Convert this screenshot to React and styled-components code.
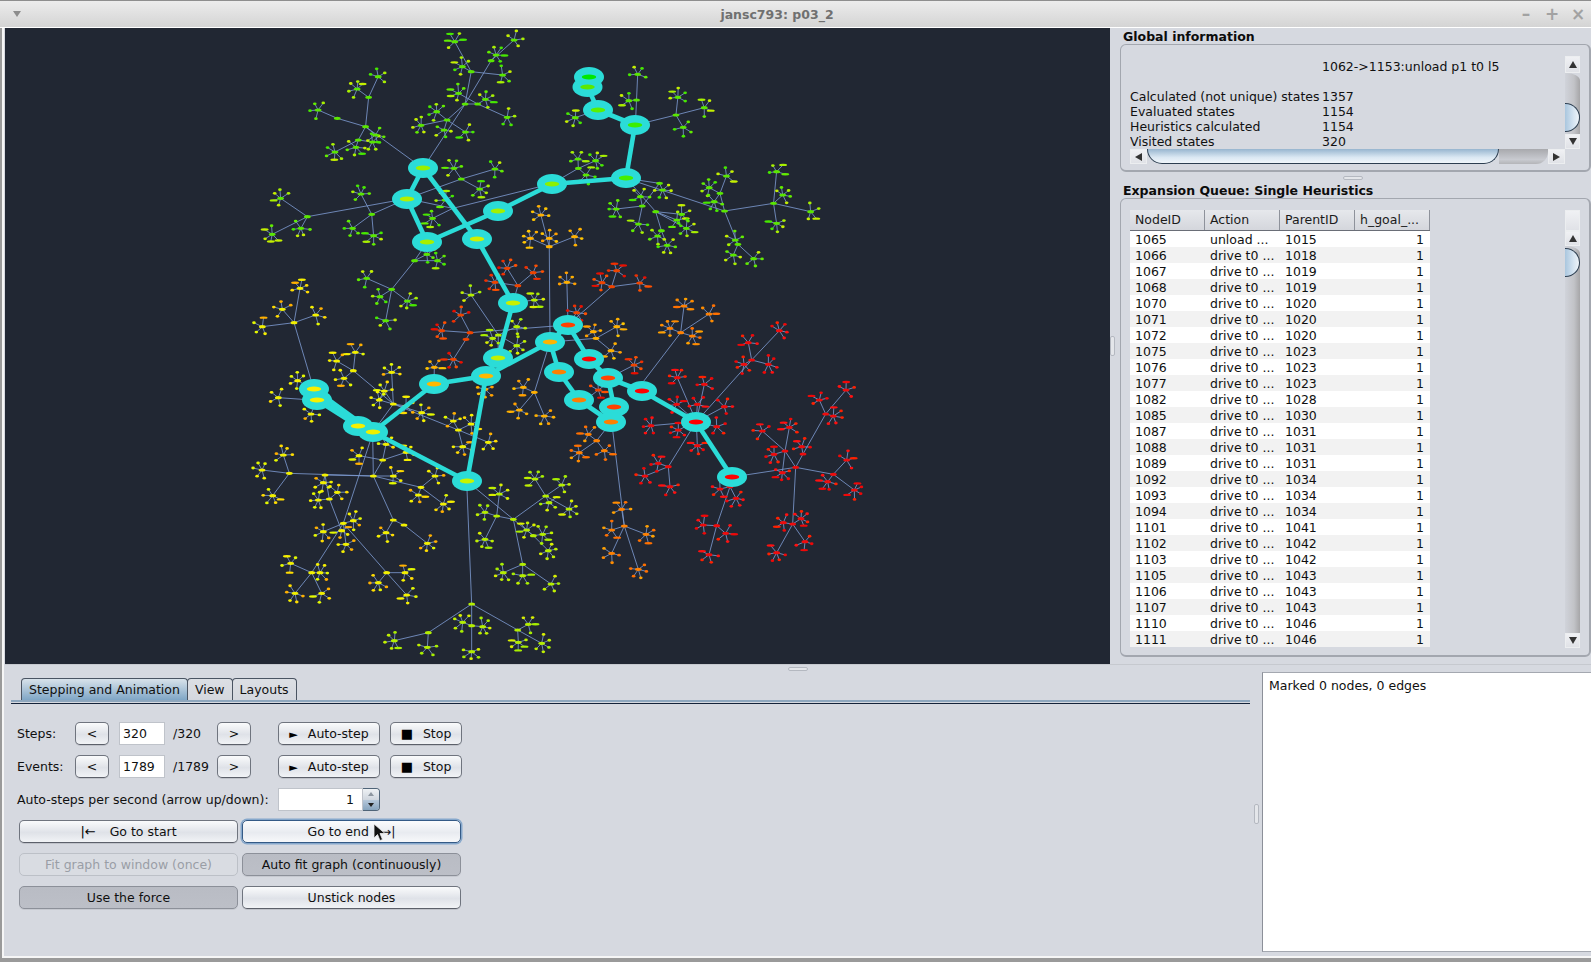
import React from 'react';
import styled, { createGlobalStyle } from 'styled-components';

const Global = createGlobalStyle`
  html, body { margin: 0; padding: 0; background: #9a9a9a; overflow: hidden; }
  body { font-family: 'DejaVu Sans', sans-serif; font-size: 12.5px; color: #101010; }
`;

const Frame = styled.div`
  width: 1591px;
  height: 962px;
  display: flex;
  flex-direction: column;
  overflow: hidden;
  background: #9a9a9a;
`;

const TitleBar = styled.div`
  height: 28px;
  flex: none;
  display: flex;
  align-items: center;
  padding: 0 0 0 13px;
  border-top: 1px solid #8e8e8e;
  border-bottom: 1px solid #fff;
  box-sizing: border-box;
  background: linear-gradient(#ececec, #d4d4d4);
  color: #707070;
`;

const Chevron = styled.span`
  width: 0;
  height: 0;
  border-left: 4.5px solid transparent;
  border-right: 4.5px solid transparent;
  border-top: 6px solid #8c8c8c;
`;

const Title = styled.div`
  flex: 1;
  text-align: center;
  font-weight: bold;
  font-size: 12.5px;
  padding-left: 20px;
`;

const WinButton = styled.span`
  width: 26px;
  text-align: center;
  font-weight: bold;
  font-size: 17px;
  color: #a2a2a2;
`;

const Content = styled.div`
  flex: none;
  height: 930px;
  margin-left: 2px;
  border-left: 2px solid #f6f6f6;
  border-bottom: 2px solid #f6f6f6;
  padding-left: 1px;
  box-sizing: border-box;
  background: #d6d9e0;
  display: flex;
  flex-direction: column;
`;

const TopPane = styled.div`
  height: 636px;
  flex: none;
  display: flex;
`;

const GraphView = styled.div`
  width: 1105px;
  height: 636px;
  flex: none;
  background: #212733;
  svg { display: block; }
`;

const VDivider = styled.div`
  width: ${(p) => p.$w}px;
  flex: none;
  display: flex;
  align-items: center;
  justify-content: center;
  &::after {
    content: '';
    width: 3px;
    height: 18px;
    border: 1px solid #b4b8c0;
    border-radius: 2px;
    background: #e4e6ea;
  }
`;

const HDivider = styled.div`
  height: ${(p) => p.$h}px;
  flex: none;
  display: flex;
  align-items: center;
  justify-content: center;
  border-top: 1px solid ${(p) => p.$line || 'transparent'};
  box-sizing: border-box;
  &::after {
    content: '';
    width: 18px;
    height: 2px;
    border: 1px solid #b4b8c0;
    border-radius: 2px;
    background: #e4e6ea;
  }
`;

const SidePanel = styled.div`
  flex: 1;
  display: flex;
  flex-direction: column;
  padding-right: 1px;
`;

const SectionTitle = styled.div`
  height: 16px;
  line-height: 18px;
  font-weight: bold;
  padding-left: 8px;
  color: #0c0c0c;
`;

const TitledBox = styled.div`
  height: ${(p) => p.$h}px;
  flex: none;
  margin-left: 5px;
  box-sizing: border-box;
  border: 1px solid #a3a7af;
  border-bottom-width: 2px;
  border-right-width: 2px;
  border-radius: 6px;
  padding: 11px 9px 0 9px;
  display: grid;
  grid-template-columns: 435px 15px;
  align-content: start;
`;

const InfoView = styled.div`
  height: 93px;
  padding-top: 3px;
  box-sizing: border-box;
  overflow: hidden;
`;

const InfoLine = styled.div`
  height: 15px;
  line-height: 15px;
  display: flex;
  white-space: pre;
`;

const InfoKey = styled.span`
  width: 192px;
  flex: none;
`;

const ArrowCell = styled.div`
  width: ${(p) => p.$w || 15}px;
  height: ${(p) => p.$h || 15}px;
  flex: none;
  display: flex;
  align-items: center;
  justify-content: center;
  background: linear-gradient(#f0f1f4, #e0e2e7);
  border: 1px solid #eceef0;
  box-sizing: border-box;
  &::after {
    content: '';
    width: 0;
    height: 0;
    ${(p) =>
      p.$dir === 'up' ? 'border: 4.5px solid transparent; border-top: 0; border-bottom: 7px solid #333;' : ''}
    ${(p) =>
      p.$dir === 'down' ? 'border: 4.5px solid transparent; border-bottom: 0; border-top: 7px solid #333;' : ''}
    ${(p) =>
      p.$dir === 'left' ? 'border: 4.5px solid transparent; border-left: 0; border-right: 7px solid #333;' : ''}
    ${(p) =>
      p.$dir === 'right' ? 'border: 4.5px solid transparent; border-right: 0; border-left: 7px solid #333;' : ''}
  }
`;

const VBar = styled.div`
  width: 15px;
  height: ${(p) => p.$h}px;
  display: flex;
  flex-direction: column;
`;

const VTrack = styled.div`
  flex: 1;
  min-height: 0;
  position: relative;
  background: linear-gradient(90deg, #d0d3da, #c2c3c7 60%, #a6a6a8);
  border-radius: 0 14px 0 0 / 0 8px 0 0;
`;

const VThumb = styled.div`
  position: absolute;
  left: 0;
  width: 15px;
  top: ${(p) => p.$top}px;
  height: ${(p) => p.$h}px;
  box-sizing: border-box;
  border: 1px solid #2c3e50;
  border-left: 0;
  border-radius: 0 15px 15px 0;
  background: linear-gradient(90deg, #a9c6de, #d5e4f1 60%, #eef4f9);
`;

const HBar = styled.div`
  grid-column: 1;
  height: 15px;
  display: flex;
`;

const HThumb = styled.div`
  width: ${(p) => p.$w}px;
  flex: none;
  box-sizing: border-box;
  border: 1px solid #2c3e50;
  border-top: 0;
  border-radius: 0 0 15px 15px;
  background: linear-gradient(#97b5cf, #dbe8f3 60%, #f0f6fa);
`;

const HTrack = styled.div`
  flex: 1;
  background: linear-gradient(#a8a9ad, #c8cad0 70%, #b4b5b8);
  border-radius: 0 0 12px 0;
`;

const QueueTable = styled.div`
  width: 300px;
`;

const HeaderRow = styled.div`
  height: 21px;
  display: grid;
  grid-template-columns: repeat(4, 75px);
  border-bottom: 1px solid #6a6e77;
  box-sizing: border-box;
  background: linear-gradient(#e6e8ec, #d4d6dc);
`;

const HeaderCell = styled.div`
  line-height: 20px;
  padding-left: 5px;
  border-right: 1px solid #8e929b;
  color: #1a1a1a;
`;

const Row = styled.div`
  height: 16px;
  line-height: 18px;
  display: grid;
  grid-template-columns: repeat(4, 75px);
  background: ${(p) => (p.$odd ? '#f2f2f2' : '#fff')};
`;

const Cell = styled.div`
  padding: 0 6px 0 5px;
  text-align: ${(p) => (p.$right ? 'right' : 'left')};
  white-space: nowrap;
  overflow: hidden;
`;

const BottomPane = styled.div`
  flex: 1;
  display: flex;
  min-height: 0;
`;

const Controls = styled.div`
  width: 1245px;
  flex: none;
  padding-top: 6px;
  box-sizing: border-box;
`;

const TabStrip = styled.div`
  display: flex;
  height: 22px;
  padding-left: 11px;
  margin-left: 6px;
`;

const Tab = styled.div`
  height: 22px;
  line-height: 21px;
  box-sizing: border-box;
  padding: 0 7px;
  border: 1px solid #4a5462;
  border-bottom: 0;
  margin-left: -1px;
  border-radius: 4px 4px 0 0;
  background: ${(p) => (p.$active ? 'linear-gradient(#d8e2ea, #7fa6c6)' : 'linear-gradient(#dcdfe4, #d4d7de)')};
`;

const TabLine = styled.div`
  margin-left: 6px;
  height: 4px;
  border-top: 2px solid #8ea7be;
  border-bottom: 1px solid #14233a;
  box-sizing: border-box;
  margin-bottom: 18px;
`;

const StepRow = styled.div`
  display: flex;
  align-items: center;
  height: 23px;
  padding-left: 12px;
  margin-bottom: ${(p) => p.$mb ?? 10}px;
`;

const RowLabel = styled.span`
  width: ${(p) => p.$w}px;
  flex: none;
  white-space: nowrap;
`;

const Button = styled.div`
  flex: none;
  width: ${(p) => p.$w}px;
  margin-left: ${(p) => p.$ml || 0}px;
  height: 23px;
  line-height: 21px;
  text-align: center;
  white-space: pre;
  box-sizing: border-box;
  border: 1px solid #6f747e;
  border-bottom-color: #5c606a;
  border-radius: 5px;
  background: linear-gradient(#fafbfc, #dfe2e8 55%, #f1f3f6);
  box-shadow: 0 1px 0 #bfc2c9;
  color: ${(p) => (p.$disabled ? '#9a9ea6' : '#101010')};
  ${(p) => p.$disabled && 'background: #d9dce2; border-color: #bcc0c7; box-shadow: none;'}
  ${(p) =>
    p.$pressed &&
    'background: linear-gradient(#b9bcc4, #bcbfc7); border-color: #8c9099; box-shadow: 0 1px 0 #c6c9d0;'}
  ${(p) =>
    p.$focus &&
    'border-color: #345a86; box-shadow: 0 0 0 1.5px #86a8cc; background: linear-gradient(#fbfcfd, #e8ebf0 55%, #f7f8fa);'}
`;

const Glyph = styled.span`
  font-size: ${(p) => p.$size || 11}px;
  color: #000;
  margin-right: ${(p) => p.$gap || 10}px;
`;

const NumberField = styled.div`
  flex: none;
  width: ${(p) => p.$w}px;
  margin-left: ${(p) => p.$ml || 0}px;
  height: 23px;
  line-height: 21px;
  box-sizing: border-box;
  border: 1px solid #bfc3ca;
  background: #fff;
  padding: 0 ${(p) => (p.$right ? '8px' : '3px')};
  text-align: ${(p) => (p.$right ? 'right' : 'left')};
`;

const SlashText = styled.span`
  width: 52px;
  flex: none;
  padding-left: 8px;
  box-sizing: border-box;
  white-space: nowrap;
`;

const Spinner = styled.div`
  width: 17px;
  height: 23px;
  flex: none;
  display: flex;
  flex-direction: column;
  box-sizing: border-box;
  border: 1px solid #4f6478;
  border-left: 0;
  border-radius: 0 4px 4px 0;
  overflow: hidden;
`;

const SpinPart = styled.div`
  flex: 1;
  display: flex;
  align-items: center;
  justify-content: center;
  background: ${(p) => (p.$down ? 'linear-gradient(#b6c8da, #86a4be)' : 'linear-gradient(#eef1f4, #cfd6de)')};
  &::after {
    content: '';
    width: 0;
    height: 0;
    border: 3px solid transparent;
    ${(p) => (p.$down ? 'border-bottom: 0; border-top: 4px solid #222;' : 'border-top: 0; border-bottom: 4px solid #8d96a0;')}
  }
`;

const ActionGrid = styled.div`
  display: grid;
  grid-template-columns: 219px 219px;
  column-gap: 4px;
  row-gap: 10px;
  padding-left: 14px;
  position: relative;
`;

const Cursor = styled.svg`
  position: absolute;
  left: 368px;
  top: 3px;
  width: 13px;
  height: 19px;
`;

const MarkedBox = styled.div`
  flex: 1;
  height: 280px;
  background: #fff;
  border-left: 1px solid #8c9099;
  border-top: 1px solid #a4a8b0;
  border-bottom: 1px solid #a4a8b0;
  padding: 5px 6px;
  box-sizing: border-box;
`;

// graph data is read per crop region, hence each group has its own origin and scale
const t = (x, y, ...kids) => ({ x, y, kids });

const palette = {
  green: { hub: '#5ae600', leaves: ['#a8f000', '#62ec00', '#46e800', '#c4f000'] },
  ygreen: { hub: '#b4ee00', leaves: ['#c0f000', '#a8ee00', '#d8f000'] },
  yellow: { hub: '#f2f000', leaves: ['#f6f000', '#ffdc00', '#e4f800', '#f6f000', '#ffb000'] },
  amber: { hub: '#ffb000', leaves: ['#ffb000', '#ffa000', '#ffc400'] },
  orange: { hub: '#ff8000', leaves: ['#ff8c00', '#ff7000', '#ffa000'] },
  redorange: { hub: '#ee4400', leaves: ['#f03000', '#ff5000', '#e81000'] },
  red: { hub: '#ee0c0c', leaves: ['#ff1010', '#ee0808', '#ff2000'] },
};

const groups = [
  {
    o: [250, 20, 2.613, 3],
    c: 'green',
    links: [[789, 491, 530, 565], [410, 536, 530, 565]],
    roots: [
      t(452, 445,
        t(302, 320, t(310, 232, t(335, 170), t(280, 207)), t(228, 295, t(178, 270)), t(328, 345),
          t(283, 360, t(222, 396), t(320, 366), t(277, 382))),
        t(562, 252, t(630, 122, t(690, 60), t(643, 105)), t(578, 155, t(535, 65), t(660, 165), t(555, 140)),
          t(515, 300, t(447, 316), t(563, 336), t(507, 330), t(488, 275)),
          t(595, 252, t(672, 292), t(615, 238), t(545, 220)))),
      t(410, 536,
        t(150, 590, t(80, 535), t(133, 625), t(58, 643)),
        t(318, 583, t(290, 522), t(268, 625), t(323, 647)),
        t(552, 477, t(640, 447), t(533, 445), t(600, 507))),
      t(530, 565, t(477, 595), t(563, 610, t(510, 540))),
      t(463, 666, t(430, 722, t(490, 722), t(462, 703))),
      t(983, 475,
        t(1240, 573, t(1228, 520, t(1245, 468), t(1200, 503), t(1213, 545)),
          t(1368, 550, t(1376, 455), t(1465, 575), t(1376, 610), t(1392, 525)),
          t(1275, 673, t(1263, 705), t(1316, 716), t(1268, 660))),
        t(1070, 490, t(1025, 558, t(957, 567), t(1015, 612), t(1020, 530)), t(1078, 510)),
        t(1060, 575, t(1075, 632, t(1090, 676), t(1065, 648)), t(1115, 600), t(1140, 625), t(1128, 583))),
      t(789, 491, t(858, 445, t(903, 422), t(857, 417), t(878, 465))),
      t(1007, 315, t(1113, 285, t(1118, 232), t(1132, 322), t(1187, 263)), t(1010, 240, t(1013, 163), t(990, 242))),
      t(910, 269, t(850, 293)),
    ],
  },
  {
    o: [250, 280, 3, 3],
    c: 'green',
    roots: [t(494, -58, t(425, 28, t(390, 50), t(472, 63), t(407, 122), t(350, -5)))],
  },
  {
    o: [250, 20, 2.613, 3],
    c: 'amber',
    roots: [
      t(784, 966, t(782, 680, t(760, 585), t(733, 655), t(782, 655), t(848, 650))),
      t(831, 915, t(828, 787)),
    ],
  },
  {
    o: [250, 20, 2.613, 3],
    c: 'redorange',
    roots: [t(687, 849, t(700, 797, t(672, 745), t(740, 758), t(640, 787)))],
  },
  {
    o: [250, 280, 3, 3],
    c: 'redorange',
    roots: [
      t(953, 135, t(1085, 20, t(1100, -28), t(1056, 8), t(1169, 9)), t(980, 98)),
      t(953, 135, t(660, 158, t(575, 152), t(632, 105), t(648, 178, t(610, 238)))),
      t(1075, 295, t(1152, 255)),
      t(1000, 365, t(1045, 330)),
    ],
  },
  {
    o: [250, 280, 3, 3],
    c: 'ygreen',
    roots: [
      t(744, 233, t(745, 165, t(663, 45), t(800, 140), t(728, 175), t(800, 197))),
      t(789, 68, t(853, 60)),
    ],
  },
  {
    o: [250, 280, 3, 3],
    c: 'amber',
    roots: [
      t(900, 186, t(1038, 175, t(1030, 155), t(1100, 140), t(1083, 212))),
      t(900, 186, t(853, 337, t(820, 322), t(808, 390), t(883, 408))),
      t(707, 289, t(705, 328)),
      t(552, 312, t(553, 262)),
    ],
  },
  {
    o: [250, 280, 3, 3],
    c: 'orange',
    roots: [t(1084, 426, t(1040, 482, t(1015, 463), t(988, 518), t(1063, 512)))],
  },
  {
    o: [240, 400, 3, 3],
    c: 'orange',
    roots: [t(1115, 65, t(1153, 378, t(1145, 328), t(1115, 390), t(1218, 403), t(1115, 460), t(1195, 508)))],
  },
  {
    o: [620, 280, 3, 3],
    c: 'orange',
    roots: [t(70, 305, t(182, 158, t(192, 78), t(267, 102), t(150, 145), t(217, 168)))],
  },
  {
    o: [250, 280, 3, 3],
    c: 'yellow',
    roots: [
      t(183, 300, t(132, 128, t(150, 25), t(97, 88), t(197, 105), t(37, 140))),
      t(191, 328, t(143, 302)),
      t(200, 361, t(85, 353), t(183, 402)),
      t(368, 457,
        t(430, 372, t(310, 272, t(260, 243), t(316, 217), t(282, 295)), t(403, 333), t(425, 277), t(388, 360),
          t(468, 378), t(515, 398), t(625, 450, t(610, 423), t(663, 432), t(638, 500), t(715, 487)))),
    ],
  },
  {
    o: [240, 400, 3, 3],
    c: 'yellow',
    roots: [
      t(398, 100,
        t(400, 228, t(148, 220, t(130, 165), t(66, 210), t(98, 287)),
          t(428, 180, t(357, 167), t(498, 157), t(438, 133)), t(460, 228),
          t(543, 262, t(585, 228), t(535, 285), t(610, 312)),
          t(460, 360, t(438, 398), t(492, 375, t(562, 430))),
          t(255, 225, t(250, 248), t(268, 297, t(235, 300), t(292, 277), t(305, 392))))),
      t(390, 125,
        t(310, 370, t(340, 362), t(250, 395), t(318, 433),
          t(215, 518, t(152, 490), t(240, 518), t(165, 580), t(245, 580)),
          t(440, 518, t(415, 548), t(495, 518), t(500, 585)))),
    ],
  },
  {
    o: [240, 400, 3, 3],
    c: 'ygreen',
    roots: [
      t(680, 243,
        t(695, 612, t(565, 698, t(463, 722), t(562, 742)), t(695, 677, t(668, 667), t(728, 680), t(695, 755)),
          t(833, 690, t(865, 673), t(835, 727), t(905, 730))),
        t(820, 358, t(770, 348, t(735, 337), t(778, 282), t(735, 418)),
          t(917, 288, t(885, 237), t(965, 255), t(927, 308), t(987, 327)),
          t(880, 407, t(860, 390), t(908, 403), t(925, 452)),
          t(848, 493, t(790, 518), t(848, 527), t(933, 552)))),
    ],
  },
  {
    o: [620, 280, 3, 3],
    c: 'red',
    roots: [
      t(229, 425, t(172, 293), t(253, 313), t(170, 373), t(232, 373), t(313, 380), t(290, 440), t(232, 497), t(175, 450),
        t(93, 437),
        t(395, 240, t(385, 188), t(372, 253), t(445, 253), t(478, 152)),
        t(145, 560, t(115, 550), t(75, 588), t(150, 620))),
      t(337, 591,
        t(527, 562, t(640, 583, t(680, 540), t(703, 630), t(623, 605)),
          t(495, 513, t(427, 453), t(508, 442), t(462, 523), t(487, 578)),
          t(549, 522, t(545, 500), t(617, 402, t(598, 360), t(678, 330), t(640, 408))),
          t(518, 732, t(490, 728), t(543, 716), t(555, 785), t(470, 818))),
        t(330, 620, t(300, 627), t(348, 655), t(290, 737, t(250, 735), t(317, 760), t(267, 824)))),
    ],
  },
];

const bigNodes = [
  [589, 77, '#00e800'], [587.5, 87, '#5ce800'], [598, 110, '#5cf000'], [635, 125, '#3cee00'], [626, 178, '#46ee00'],
  [552, 184, '#8cf000'], [498, 211, '#a4f000'], [427, 242, '#a8f000'], [407, 199, '#b4f000'], [423, 168, '#9cf000'],
  [477, 239, '#d0f000'], [513, 303, '#c8f000'], [498, 358, '#c4f000'], [486, 376, '#ffb800'], [550, 342, '#ffb400'],
  [568, 325, '#ff4000'], [589, 359, '#ff0000'], [608, 378, '#ff4400'], [642, 391, '#ff0000'], [559, 372, '#ff8000'],
  [579, 400, '#ff7c00'], [614, 407, '#ff4000'], [611, 422, '#ff8000'], [696, 422, '#ff0000'], [732, 477, '#ff0000'],
  [434, 384, '#ffb800'], [314, 389, '#f6f000'], [317, 400, '#f6f000'], [358, 426, '#f6f000'], [373, 432, '#eef000'],
  [467, 481, '#c8f400'],
];

const thickEdges = [
  [0, 1], [1, 2], [2, 3], [3, 4], [4, 5], [5, 6], [6, 7], [7, 8], [8, 9], [9, 10], [10, 11], [11, 12], [12, 13],
  [13, 14], [14, 15], [15, 16], [16, 17], [17, 18], [18, 23], [23, 24], [14, 19], [19, 20], [20, 22], [22, 21],
  [21, 17], [13, 25], [25, 29], [13, 30], [30, 29], [26, 28], [27, 29], [26, 29], [27, 28],
];

// small seeded generator so every leaf keeps its place between renders
const makeRng = (seed) => {
  let s = seed;
  return () => {
    s = (s * 16807) % 2147483647;
    return s / 2147483647;
  };
};

const buildGraph = () => {
  const lines = [];
  const hubs = [];
  const leaves = [];
  const rng = makeRng(4217);

  // leaves fan out away from the parent, the way the force layout leaves them
  const star = (x, y, parentX, parentY, colors) => {
    const n = rng() > 0.45 ? 5 : 4;
    const back = Math.atan2(parentY - y, parentX - x);
    const span = Math.PI * 1.5;
    for (let i = 0; i < n; i++) {
      const a = back + Math.PI * 0.25 + ((i + 0.5) * span) / n + (rng() - 0.5) * 0.25;
      const len = 7 + rng() * 2.5;
      const lx = x + Math.cos(a) * len;
      const ly = y + Math.sin(a) * len;
      lines.push([x, y, lx, ly]);
      const wide = rng() > 0.82;
      leaves.push([lx, ly, wide ? 4 : 1.8, wide ? 1.2 : 1.4, colors[Math.floor(rng() * colors.length)]]);
    }
  };

  groups.forEach((g) => {
    const [ox, oy, sx, sy] = g.o;
    const px = (x) => ox + x / sx;
    const py = (y) => oy + y / sy;
    const colors = palette[g.c];
    (g.links || []).forEach(([a, b, c, d]) => lines.push([px(a), py(b), px(c), py(d)]));
    const walk = (node, parent) => {
      const x = px(node.x);
      const y = py(node.y);
      if (parent) hubs.push([x, y, colors.hub]);
      if (parent && node.kids.length === 0) star(x, y, parent[0], parent[1], colors.leaves);
      node.kids.forEach((kid) => {
        lines.push([x, y, px(kid.x), py(kid.y)]);
        walk(kid, [x, y]);
      });
    };
    g.roots.forEach((root) => walk(root, null));
  });
  return { lines, hubs, leaves };
};

const graph = buildGraph();

const GraphDrawing = () => (
  <svg width="1105" height="636" viewBox="5 28 1105 636">
    <g stroke="#7c9ad0" strokeWidth="0.9" strokeOpacity="0.92">
      {graph.lines.map(([a, b, c, d], i) => (
        <line key={i} x1={a} y1={b} x2={c} y2={d} />
      ))}
    </g>
    {graph.leaves.map(([x, y, rx, ry, c], i) => (
      <ellipse key={i} cx={x} cy={y} rx={rx} ry={ry} fill={c} />
    ))}
    {graph.hubs.map(([x, y, c], i) => (
      <ellipse key={i} cx={x} cy={y} rx="3.4" ry="1.6" fill={c} />
    ))}
    <g stroke="#2bdcd8" strokeWidth="4.6">
      {thickEdges.map(([a, b], i) => (
        <line key={i} x1={bigNodes[a][0]} y1={bigNodes[a][1]} x2={bigNodes[b][0]} y2={bigNodes[b][1]} />
      ))}
    </g>
    {bigNodes.map(([x, y], i) => (
      <ellipse key={i} cx={x} cy={y} rx="15" ry="10" fill="#2bdcd8" />
    ))}
    {bigNodes.map(([x, y, c], i) => (
      <ellipse key={i} cx={x} cy={y} rx="7.2" ry="2.5" fill={c} />
    ))}
  </svg>
);

const queue = [
  [1065, 'unload ...', 1015], [1066, 'drive t0 ...', 1018], [1067, 'drive t0 ...', 1019], [1068, 'drive t0 ...', 1019],
  [1070, 'drive t0 ...', 1020], [1071, 'drive t0 ...', 1020], [1072, 'drive t0 ...', 1020], [1075, 'drive t0 ...', 1023],
  [1076, 'drive t0 ...', 1023], [1077, 'drive t0 ...', 1023], [1082, 'drive t0 ...', 1028], [1085, 'drive t0 ...', 1030],
  [1087, 'drive t0 ...', 1031], [1088, 'drive t0 ...', 1031], [1089, 'drive t0 ...', 1031], [1092, 'drive t0 ...', 1034],
  [1093, 'drive t0 ...', 1034], [1094, 'drive t0 ...', 1034], [1101, 'drive t0 ...', 1041], [1102, 'drive t0 ...', 1042],
  [1103, 'drive t0 ...', 1042], [1105, 'drive t0 ...', 1043], [1106, 'drive t0 ...', 1043], [1107, 'drive t0 ...', 1043],
  [1110, 'drive t0 ...', 1046], [1111, 'drive t0 ...', 1046],
];

const info = [
  ['Calculated (not unique) states', '1357'],
  ['Evaluated states', '1154'],
  ['Heuristics calculated', '1154'],
  ['Visited states', '320'],
];

const GlobalInfo = () => (
  <TitledBox $h={128}>
    <InfoView>
      <InfoLine>
        <InfoKey />
        1062-&gt;1153:unload p1 t0 l5
      </InfoLine>
      <InfoLine />
      {info.map(([k, v]) => (
        <InfoLine key={k}>
          <InfoKey>{k}</InfoKey>
          {v}
        </InfoLine>
      ))}
    </InfoView>
    <VBar $h={93}>
      <ArrowCell $dir="up" $h={17} />
      <VTrack>
        <VThumb $top={30} $h={29} />
      </VTrack>
      <ArrowCell $dir="down" />
    </VBar>
    <HBar>
      <ArrowCell $dir="left" $w={17} />
      <HThumb $w={352} />
      <HTrack />
      <ArrowCell $dir="right" $w={17} />
    </HBar>
  </TitledBox>
);

const QueueBox = () => (
  <TitledBox $h={459}>
    <QueueTable>
      <HeaderRow>
        <HeaderCell>NodeID</HeaderCell>
        <HeaderCell>Action</HeaderCell>
        <HeaderCell>ParentID</HeaderCell>
        <HeaderCell>h_goal_...</HeaderCell>
      </HeaderRow>
      {queue.map(([id, action, parent], i) => (
        <Row key={id} $odd={i % 2 === 1}>
          <Cell>{id}</Cell>
          <Cell>{action}</Cell>
          <Cell>{parent}</Cell>
          <Cell $right>1</Cell>
        </Row>
      ))}
    </QueueTable>
    <VBar $h={438}>
      <ArrowCell $h={21} />
      <ArrowCell $dir="up" />
      <VTrack>
        <VThumb $top={2} $h={29} />
      </VTrack>
      <ArrowCell $dir="down" />
    </VBar>
  </TitledBox>
);

const Stepper = ({ label, value, total }) => (
  <StepRow>
    <RowLabel $w={58}>{label}</RowLabel>
    <Button $w={34}>&lt;</Button>
    <NumberField $w={46} $ml={10}>
      {value}
    </NumberField>
    <SlashText>{total}</SlashText>
    <Button $w={34}>&gt;</Button>
    <Button $w={102} $ml={27}>
      <Glyph>►</Glyph>Auto-step
    </Button>
    <Button $w={72} $ml={10}>
      <Glyph $size={13}>■</Glyph>Stop
    </Button>
  </StepRow>
);

export default function App() {
  return (
    <Frame>
      <Global />
      <TitleBar>
        <Chevron />
        <Title>jansc793: p03_2</Title>
        <WinButton>–</WinButton>
        <WinButton>+</WinButton>
        <WinButton>×</WinButton>
      </TitleBar>
      <Content>
        <TopPane>
          <GraphView>
            <GraphDrawing />
          </GraphView>
          <VDivider $w={5} />
          <SidePanel>
            <SectionTitle>Global information</SectionTitle>
            <GlobalInfo />
            <HDivider $h={10} />
            <SectionTitle>Expansion Queue: Single Heuristics</SectionTitle>
            <QueueBox />
          </SidePanel>
        </TopPane>
        <HDivider $h={8} $line="#c6c9cf" />
        <BottomPane>
          <Controls>
            <TabStrip>
              <Tab $active>Stepping and Animation</Tab>
              <Tab>View</Tab>
              <Tab>Layouts</Tab>
            </TabStrip>
            <TabLine />
            <Stepper label="Steps:" value="320" total="/320" />
            <Stepper label="Events:" value="1789" total="/1789" />
            <StepRow $mb={9}>
              <RowLabel $w={261}>Auto-steps per second (arrow up/down):</RowLabel>
              <NumberField $w={85} $right>
                1
              </NumberField>
              <Spinner>
                <SpinPart />
                <SpinPart $down />
              </Spinner>
            </StepRow>
            <ActionGrid>
              <Button $w={219}>
                <Glyph $size={13}>|←</Glyph> Go to start
              </Button>
              <Button $w={219} $focus>
                Go to end   →|
              </Button>
              <Button $w={219} $disabled>
                Fit graph to window (once)
              </Button>
              <Button $w={219} $pressed>
                Auto fit graph (continuously)
              </Button>
              <Button $w={219} $pressed>
                Use the force
              </Button>
              <Button $w={219}>Unstick nodes</Button>
              <Cursor viewBox="0 0 13 19">
                <path d="M1 1 L1 15 L4.5 11.5 L7 17.5 L9.5 16.5 L7 10.5 L12 10.5 Z" fill="#111" stroke="#eee" strokeWidth="0.8" />
              </Cursor>
            </ActionGrid>
          </Controls>
          <VDivider $w={12} />
          <MarkedBox>Marked 0 nodes, 0 edges</MarkedBox>
        </BottomPane>
      </Content>
    </Frame>
  );
}
